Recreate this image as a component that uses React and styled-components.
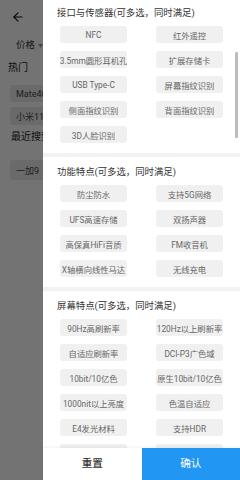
import React, { useEffect, useRef } from 'react';
import styled, { createGlobalStyle } from 'styled-components';
import { ArrowLeft } from 'lucide-react';

const GlobalStyle = createGlobalStyle`
  html, body {
    margin: 0;
    padding: 0;
    width: 240px;
    height: 480px;
    overflow: hidden;
    background: #fff;
    font-family: Roboto, "Noto Sans CJK SC", sans-serif;
  }
  * {
    box-sizing: border-box;
  }
`;

const Screen = styled.div`
  position: relative;
  width: 240px;
  height: 480px;
  overflow: hidden;
  background: #fff;
`;

/* search page behind the drawer */

const SearchPage = styled.div`
  display: flex;
  flex-direction: column;
  height: 100%;
  color: #222;
`;

const TopBar = styled.div`
  height: 34px;
  display: flex;
  align-items: center;
  padding-left: 11px;
  color: #111;
`;

const FilterBar = styled.div`
  height: 20px;
  display: flex;
  align-items: center;
  padding-left: 16px;
`;

const FilterItem = styled.span`
  display: flex;
  align-items: center;
  gap: 3px;
  font-size: 9.5px;
  color: #333;
`;

const Caret = styled.span`
  font-size: 5px;
  color: #999;
`;

const PageLabel = styled.div`
  font-size: 10px;
  line-height: 20px;
  padding-left: ${(p) => p.$indent}px;
  margin-top: ${(p) => p.$top}px;
  color: #222;
`;

const ChipList = styled.div`
  display: flex;
  flex-direction: column;
  gap: 5px;
  padding-left: 10px;
  margin-top: ${(p) => p.$top}px;
`;

const PageChip = styled.span`
  width: 90px;
  height: ${(p) => p.$h || 18}px;
  display: flex;
  align-items: center;
  padding-left: 6px;
  border-radius: 3px;
  background: #ececec;
  font-size: 9px;
  color: #444;
  white-space: nowrap;
`;

const Mask = styled.div`
  position: absolute;
  inset: 0;
  background: rgba(0, 0, 0, 0.55);
`;

/* filter drawer */

const Drawer = styled.div`
  position: absolute;
  top: 0;
  right: 0;
  bottom: 0;
  width: 197px;
  background: #fff;
  display: flex;
  flex-direction: column;
`;

const Body = styled.div`
  flex: 1;
  overflow-y: auto;
  scrollbar-width: none;
  &::-webkit-scrollbar {
    display: none;
  }
`;

const Section = styled.section`
  padding: 3px 0 10px;
  & + & {
    border-top: 4px solid #f2f2f2;
  }
`;

const SectionTitle = styled.div`
  height: 24px;
  line-height: 24px;
  padding-left: 14px;
  font-size: 9.4px;
  color: #333;
  white-space: nowrap;
`;

const OptionGrid = styled.div`
  margin-top: 1px;
  padding: 0 17px;
  display: grid;
  grid-template-columns: 1fr 1fr;
  column-gap: 29px;
  row-gap: 8px;
`;

const Option = styled.div`
  height: 17px;
  border-radius: 3px;
  background: #f0f0f0;
  display: flex;
  align-items: center;
  justify-content: center;
  font-size: 8.3px;
  color: #666;
  white-space: nowrap;
  overflow: hidden;
`;

const ScrollThumb = styled.div`
  position: absolute;
  top: 52px;
  right: 2px;
  width: 3px;
  height: 86px;
  border-radius: 1px;
  background: #bdbdbd;
`;

const Footer = styled.div`
  height: 32px;
  display: flex;
  box-shadow: 0 -1px 3px rgba(0, 0, 0, 0.06);
  position: relative;
`;

const FooterButton = styled.button`
  flex: 1;
  height: 32px;
  border: none;
  padding: 0;
  display: flex;
  align-items: center;
  justify-content: center;
  font-family: inherit;
  font-size: 10.6px;
  line-height: 16px;
  font-weight: ${(p) => (p.$primary ? 400 : 500)};
  background: ${(p) => (p.$primary ? '#2196f3' : '#fff')};
  color: ${(p) => (p.$primary ? '#fff' : '#333')};
`;

const sections = [
  {
    title: '接口与传感器(可多选，同时满足)',
    options: [
      'NFC',
      '红外遥控',
      '3.5mm圆形耳机孔',
      '扩展存储卡',
      'USB Type-C',
      '屏幕指纹识别',
      '侧面指纹识别',
      '背面指纹识别',
      '3D人脸识别',
    ],
  },
  {
    title: '功能特点(可多选，同时满足)',
    options: [
      '防尘防水',
      '支持5G网络',
      'UFS高速存储',
      '双扬声器',
      '高保真HiFi音质',
      'FM收音机',
      'X轴横向线性马达',
      '无线充电',
    ],
  },
  {
    title: '屏幕特点(可多选，同时满足)',
    options: [
      '90Hz高刷新率',
      '120Hz以上刷新率',
      '自适应刷新率',
      'DCI-P3广色域',
      '10bit/10亿色',
      '原生10bit/10亿色',
      '1000nit以上亮度',
      '色温自适应',
      'E4发光材料',
      '支持HDR',
      '曲面屏',
      '屏下摄像头',
    ],
  },
];

export default function App() {
  const bodyRef = useRef(null);

  // the list is shown scrolled a little
  useEffect(() => {
    if (bodyRef.current) bodyRef.current.scrollTop = 2;
  }, []);

  return (
    <Screen>
      <GlobalStyle />
      <SearchPage>
        <TopBar>
          <ArrowLeft size={14} strokeWidth={2} />
        </TopBar>
        <FilterBar>
          <FilterItem>
            价格<Caret>▼</Caret>
          </FilterItem>
        </FilterBar>
        <PageLabel $indent={8} $top={4}>热门</PageLabel>
        <ChipList $top={7}>
          <PageChip $h={17}>Mate40 Pro</PageChip>
          <PageChip>小米11 Ultra</PageChip>
        </ChipList>
        <PageLabel $indent={11} $top={2}>最近搜索</PageLabel>
        <ChipList $top={13}>
          <PageChip $h={20}>一加9</PageChip>
        </ChipList>
      </SearchPage>
      <Mask />
      <Drawer>
        <Body ref={bodyRef}>
          {sections.map((s) => (
            <Section key={s.title}>
              <SectionTitle>{s.title}</SectionTitle>
              <OptionGrid>
                {s.options.map((o) => (
                  <Option key={o}>{o}</Option>
                ))}
              </OptionGrid>
            </Section>
          ))}
        </Body>
        <ScrollThumb />
        <Footer>
          <FooterButton>重置</FooterButton>
          <FooterButton $primary>确认</FooterButton>
        </Footer>
      </Drawer>
    </Screen>
  );
}
